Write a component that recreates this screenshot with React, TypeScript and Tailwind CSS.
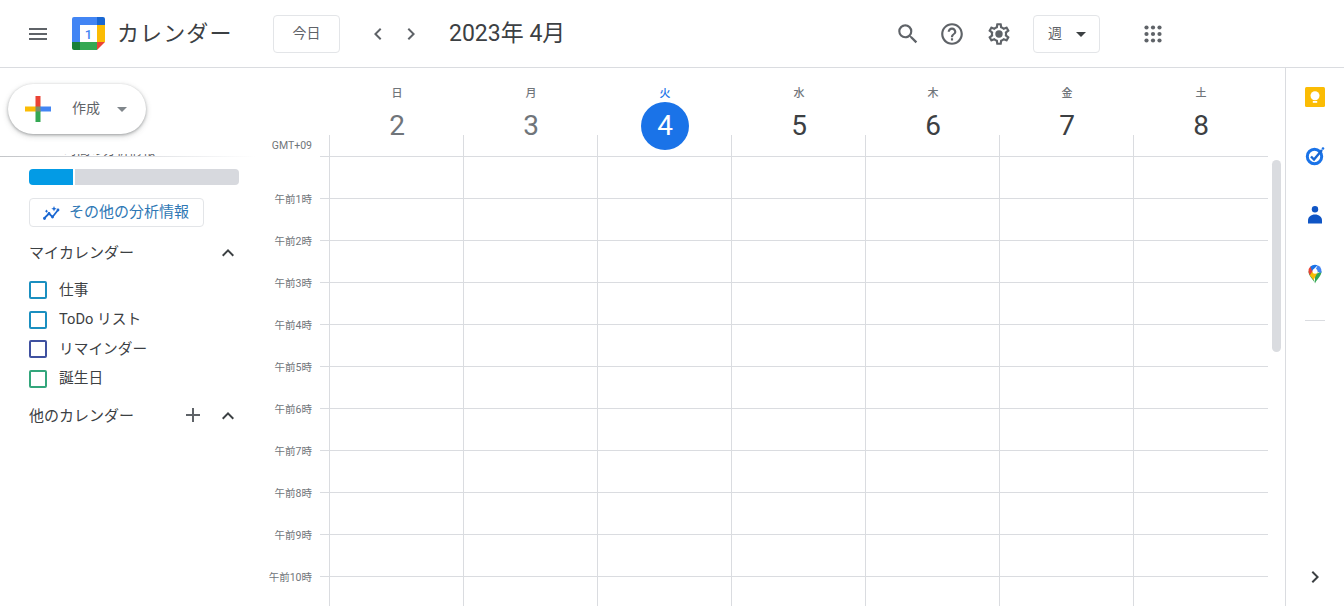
import React from "react";
import { MdMenu, MdSearch, MdHelpOutline, MdChevronLeft, MdChevronRight, MdExpandLess, MdAdd, MdArrowDropDown } from "react-icons/md";

const days = [
  ["日", "2"], ["月", "3"], ["火", "4"], ["水", "5"], ["木", "6"], ["金", "7"], ["土", "8"],
];
const hours = ["", "午前1時", "午前2時", "午前3時", "午前4時", "午前5時", "午前6時", "午前7時", "午前8時", "午前9時", "午前10時"];
const cals: [string, string][] = [
  ["仕事", "border-[#1a8fc0]"],
  ["ToDo リスト", "border-[#1a8fc0]"],
  ["リマインダー", "border-[#3f51a0]"],
  ["誕生日", "border-[#33a67c]"],
];

function Gear() {
  return (
    <svg viewBox="0 0 24 24" className="w-[26px] h-[26px] fill-[#5f6368]">
      <path d="M19.43 12.98c.04-.32.07-.64.07-.98 0-.34-.03-.66-.07-.98l2.11-1.65c.19-.15.24-.42.12-.64l-2-3.46c-.09-.16-.26-.25-.44-.25-.06 0-.12.01-.17.03l-2.49 1c-.52-.4-1.08-.73-1.69-.98l-.38-2.65C14.46 2.18 14.25 2 14 2h-4c-.25 0-.46.18-.49.42l-.38 2.65c-.61.25-1.17.59-1.69.98l-2.49-1c-.06-.02-.12-.03-.18-.03-.17 0-.34.09-.43.25l-2 3.46c-.13.22-.07.49.12.64l2.11 1.65c-.04.32-.07.65-.07.98 0 .33.03.66.07.98l-2.11 1.65c-.19.15-.24.42-.12.64l2 3.46c.09.16.26.25.44.25.06 0 .12-.01.17-.03l2.49-1c.52.4 1.08.73 1.69.98l.38 2.65c.03.24.24.42.49.42h4c.25 0 .46-.18.49-.42l.38-2.65c.61-.25 1.17-.59 1.69-.98l2.49 1c.06.02.12.03.18.03.17 0 .34-.09.43-.25l2-3.46c.12-.22.07-.49-.12-.64l-2.11-1.65zm-1.98-1.71c.04.31.05.52.05.73 0 .21-.02.43-.05.73l-.14 1.13.89.7 1.08.84-.7 1.21-1.27-.51-1.04-.42-.9.68c-.43.32-.84.56-1.25.73l-1.06.43-.16 1.13-.2 1.35h-1.4l-.19-1.35-.16-1.13-1.06-.43c-.43-.18-.83-.41-1.23-.71l-.91-.7-1.06.43-1.27.51-.7-1.21 1.08-.84.89-.7-.14-1.13c-.03-.31-.05-.54-.05-.74s.02-.43.05-.73l.14-1.13-.89-.7-1.08-.84.7-1.21 1.27.51 1.04.42.9-.68c.43-.32.84-.56 1.25-.73l1.06-.43.16-1.13.2-1.35h1.39l.19 1.35.16 1.13 1.06.43c.43.18.83.41 1.23.71l.91.7 1.06-.43 1.27-.51.7 1.21-1.07.85-.89.7.14 1.13z" />
      <circle cx="12" cy="12" r="3.4" />
    </svg>
  );
}

function Apps() {
  const pts = [3.5, 10, 16.5];
  return (
    <svg viewBox="0 0 20 20" className="w-[20px] h-[20px] fill-[#5f6368]">
      {pts.map((y) => pts.map((x) => <circle key={`${x}-${y}`} cx={x} cy={y} r="2.1" />))}
    </svg>
  );
}

function Logo() {
  return (
    <svg viewBox="0 0 33 33" className="w-[33px] h-[33px]">
      <path d="M2 0H25V8H8V25H0V2a2 2 0 0 1 2-2z" fill="#4285f4" />
      <path d="M25 0h6a2 2 0 0 1 2 2v6h-8z" fill="#1967d2" />
      <rect x="25" y="8" width="8" height="17" fill="#fbbc04" />
      <rect x="8" y="25" width="17" height="8" fill="#34a853" />
      <path d="M0 25h8v8H2a2 2 0 0 1-2-2z" fill="#188038" />
      <path d="M25 25h8l-8 8z" fill="#ea4335" />
      <text x="16.5" y="21.5" textAnchor="middle" fontSize="13" fontWeight="500" fill="#4285f4" fontFamily="Roboto">1</text>
    </svg>
  );
}

function Plus() {
  return (
    <svg viewBox="0 0 26 26" className="w-[26px] h-[26px]">
      <rect x="10.5" y="0" width="5" height="11" fill="#ea4335" />
      <rect x="15" y="10.5" width="11" height="5" fill="#4285f4" />
      <rect x="10.5" y="15" width="5" height="11" fill="#34a853" />
      <rect x="0" y="10.5" width="11" height="5" fill="#fbbc04" />
      <rect x="10.5" y="10.5" width="5" height="5" fill="#7d8f6a" />
    </svg>
  );
}

function Insights() {
  return (
    <svg viewBox="0 0 20 20" className="w-[20px] h-[20px]">
      <polyline points="2,15.5 7,10.5 10.5,14 16,7" fill="none" stroke="#1967d2" strokeWidth="1.8" />
      <circle cx="2.5" cy="15.5" r="1.4" fill="#1967d2" />
      <circle cx="7" cy="10.5" r="1.4" fill="#1967d2" />
      <circle cx="10.5" cy="14" r="1.4" fill="#1967d2" />
      <circle cx="16" cy="7" r="1.4" fill="#1967d2" />
      <path d="M12 3l.8 1.9 1.9.8-1.9.8L12 8.400l-.8-1.900-1.900-.8 1.900-.8z" fill="#1967d2" />
      <path d="M4.500 6.500l.6 1.100 1.100.6-1.100.6-.6 1.100-.6-1.100-1.100-.6 1.100-.6z" fill="#1967d2" />
    </svg>
  );
}

function Keep() {
  return (
    <svg viewBox="0 0 20 20" className="w-[20px] h-[20px]">
      <rect width="20" height="20" rx="1.5" fill="#fbbc04" />
      <circle cx="10" cy="8.800" r="4.500" fill="#fff" />
      <rect x="7.800" y="14" width="4.400" height="1.800" fill="#fff" />
    </svg>
  );
}

function Tasks() {
  return (
    <svg viewBox="0 0 20 20" className="w-[20px] h-[20px]">
      <circle cx="9.500" cy="10.500" r="7.200" fill="none" stroke="#1a73e8" strokeWidth="3" />
      <path d="M6 10.500l3 3 8-9.500" fill="none" stroke="#1967d2" strokeWidth="2.400" />
      <circle cx="18" cy="2.500" r="1.300" fill="#1a73e8" />
    </svg>
  );
}

function Contacts() {
  return (
    <svg viewBox="0 0 20 20" className="w-[20px] h-[20px]">
      <circle cx="10" cy="4.300" r="3.200" fill="#0f55c5" />
      <path d="M3 18.500v-3C3 12 6 9.500 10 9.500s7 2.500 7 6v3z" fill="#0f55c5" />
    </svg>
  );
}

function Maps() {
  return (
    <svg viewBox="0 0 20 20" className="w-[20px] h-[20px]">
      <path d="M10 19.500C8.500 15.500 3.500 12 3.500 7.200L7 8z" fill="#34a853" />
      <path d="M10 19.500c1.500-4 6.500-7.500 6.500-12.300L10 10.500z" fill="#34a853" />
      <path d="M5.400 2.600A6.500 6.500 0 0 0 3.500 7.200c0 1.500.6 2.800 1.400 4L10 5.500z" fill="#ea4335" />
      <path d="M4.900 11.200c1 1.500 2.500 3 3.600 5L13 7.500 7 8z" fill="#fbbc04" />
      <path d="M5.400 2.600A6.500 6.500 0 0 1 10 .7c1 0 1.800.2 2.600.6L7 7z" fill="#1a73e8" />
      <path d="M12.600 1.300a6.500 6.500 0 0 1 3.900 5.900c0 .6-.1 1.200-.3 1.800L10 7z" fill="#4285f4" />
      <circle cx="10" cy="7.200" r="2.500" fill="#fff" />
    </svg>
  );
}

function NavButton({ children, className }: { children: React.ReactNode; className: string }) {
  return (
    <div className={`h-[38px] w-[67px] rounded-[4px] border border-[#e3e5e8] flex items-center text-[14px] text-[#5f6368] ${className}`}>
      {children}
    </div>
  );
}

export default function App() {
  return (
    <div
      className="w-[1344px] h-[606px] overflow-hidden bg-white flex flex-col text-[#3c4043]"
      style={{ fontFamily: 'Roboto, "Noto Sans CJK JP", sans-serif' }}
    >
      <header className="h-[68px] shrink-0 border-b border-[#dadce0] flex items-center">
        <MdMenu className="ml-[26px] w-[24px] h-[24px] text-[#5f6368]" />
        <div className="ml-[22px]"><Logo /></div>
        <div className="ml-[12px] text-[22px] tracking-[1.100px] text-[#3c4043] w-[156px] whitespace-nowrap">カレンダー</div>
        <NavButton className="justify-center">今日</NavButton>
        <MdChevronLeft className="ml-[26px] w-[24px] h-[24px] text-[#5f6368]" />
        <MdChevronRight className="ml-[9px] w-[24px] h-[24px] text-[#5f6368]" />
        <div className="ml-[26px] mt-[2px] text-[23px] text-[#3c4043] whitespace-nowrap w-[336px]">2023年 4月</div>
        <MdSearch className="ml-[110px] w-[26px] h-[26px] text-[#5f6368]" />
        <MdHelpOutline className="ml-[18px] w-[26px] h-[26px] text-[#5f6368]" />
        <div className="ml-[21px]"><Gear /></div>
        <NavButton className="ml-[21px] pl-[14px]">
          週
          <MdArrowDropDown className="ml-[7px] w-[24px] h-[24px] text-[#3c4043]" />
        </NavButton>
        <div className="ml-[43px]"><Apps /></div>
      </header>

      <div className="flex flex-1 min-h-0">
        <aside className="w-[256px] shrink-0 flex flex-col">
          <div className="h-[88px] shrink-0 pt-[16px] pl-[8px]">
            <div className="w-[138px] h-[50px] rounded-full bg-white shadow-[0_1px_3px_rgba(60,64,67,0.4),0_2px_6px_rgba(60,64,67,0.2)] flex items-center pl-[17px]">
              <Plus />
              <span className="ml-[21px] -mt-[2px] text-[14px] text-[#5f6368]">作成</span>
              <MdArrowDropDown className="ml-[10px] w-[24px] h-[24px] text-[#80868b]" />
            </div>
          </div>
          <div className="h-[2px] -mt-[2px] overflow-hidden pl-[64px] text-[13px] leading-[12px] text-[#5f6368]">
            <div className="-mt-[10px] whitespace-nowrap">時間の分析情報</div>
          </div>
          <div className="h-px bg-linear-to-r from-[#c4c6c9] via-[#dadce0] to-transparent shrink-0" />
          <div className="pl-[29px] pt-[12px]">
            <div className="w-[210px] h-[16px] flex gap-[2px]">
              <div className="w-[44px] bg-[#039be5] rounded-l-[4px]" />
              <div className="flex-1 bg-[#d7d9de] rounded-r-[4px]" />
            </div>
            <div className="mt-[13px] w-[175px] h-[29px] rounded-[4px] border border-[#e3e5e8] flex items-center pl-[12px] gap-[7px]">
              <Insights />
              <span className="text-[15px] text-[#2f78b5] whitespace-nowrap">その他の分析情報</span>
            </div>
            <div className="mt-[14px] w-[211px] h-[24px] flex items-center justify-between text-[15px] text-[#3c4043]">
              <span className="whitespace-nowrap">マイカレンダー</span>
              <MdExpandLess className="w-[24px] h-[24px] text-[#3c4043]" />
            </div>
            <div className="mt-[16px] flex flex-col gap-[11.500px]">
              {cals.map(([name, color]) => (
                <div key={name} className="flex items-center h-[18px]">
                  <div className={`w-[18px] h-[18px] rounded-[2px] border-2 ${color}`} />
                  <span className="ml-[12px] text-[14.700px] text-[#3c4043] whitespace-nowrap">{name}</span>
                </div>
              ))}
            </div>
            <div className="mt-[17px] w-[211px] h-[24px] flex items-center text-[15px] text-[#3c4043]">
              <span className="whitespace-nowrap flex-1">他のカレンダー</span>
              <MdAdd className="-mt-[3px] w-[24px] h-[24px] text-[#5f6368]" />
              <MdExpandLess className="-mt-[1px] ml-[11px] w-[24px] h-[24px] text-[#3c4043]" />
            </div>
          </div>
        </aside>

        <main className="relative w-[1029px] shrink-0 overflow-hidden">
          <div className="flex h-[67px]">
            <div className="w-[73px] shrink-0" />
            {days.map(([d, n]) => {
              const today = n === "4";
              return (
                <div key={n} className="w-[134px] shrink-0 flex flex-col items-center pt-[19px] pl-[2px]">
                  <div className={`text-[11px] leading-[14px] font-medium shrink-0 ${today ? "text-[#1a73e8]" : "text-[#70757a]"}`}>{d}</div>
                  {today ? (
                    <div className="mt-[1px] w-[48px] h-[48px] shrink-0 rounded-full bg-[#1a73e8] text-white flex items-center justify-center text-[28px]">{n}</div>
                  ) : (
                    <div className={`mt-[1px] h-[48px] shrink-0 flex items-center text-[28px] ${n === "2" || n === "3" ? "text-[#70757a]" : "text-[#3c4043]"}`}>{n}</div>
                  )}
                </div>
              );
            })}
          </div>
          <div className="flex h-[21px]">
            <div className="w-[56px] shrink-0 text-right text-[10.500px] leading-[22px] text-[#70757a] whitespace-nowrap">GMT+09</div>
            <div className="w-[17px] shrink-0" />
            {days.map(([, n]) => (
              <div key={n} className="w-[134px] shrink-0 border-l border-[#dadce0]" />
            ))}
          </div>
          {hours.map((h, i) => (
            <div key={i} className="flex h-[42px]">
              <div className="w-[56px] shrink-0 text-right text-[10.500px] leading-[14px] -mt-[5px] h-[14px] text-[#70757a] whitespace-nowrap">{h}</div>
              <div className="w-[8px] shrink-0" />
              <div className="w-[9px] shrink-0 border-t border-[#dadce0]" />
              {days.map(([, n]) => (
                <div key={n} className="w-[134px] shrink-0 border-l border-t border-[#dadce0]" />
              ))}
              <div className="w-[1px] shrink-0 border-t border-[#dadce0]" />
            </div>
          ))}
          <div className="absolute left-[1016px] top-[92px] w-[9px] h-[192px] rounded-full bg-[#dadce0]" />
        </main>

        <aside className="flex-1 border-l border-[#dadce0] flex flex-col items-center pt-[19px]">
          <Keep />
          <div className="mt-[39px]"><Tasks /></div>
          <div className="mt-[39px]"><Contacts /></div>
          <div className="mt-[39px]"><Maps /></div>
          <div className="mt-[36px] w-[20px] h-px bg-[#dadce0]" />
          <div className="flex-1" />
          <MdChevronRight className="mb-[17px] w-[24px] h-[24px] text-[#3c4043]" />
        </aside>
      </div>
    </div>
  );
}
